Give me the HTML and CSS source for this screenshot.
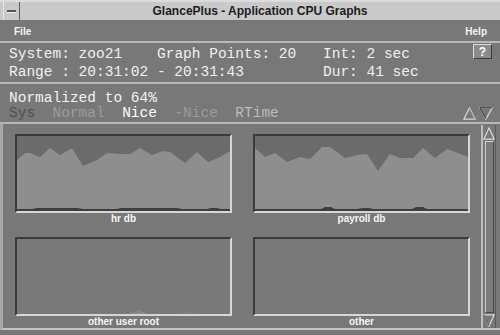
FILE: index.html
```html
<!DOCTYPE html>
<html lang="en">
<head>
  <meta charset="UTF-8">
  <title>GlancePlus - Application CPU Graphs</title>
  <link rel="stylesheet" href="styles.css">
</head>
<body>
  <div class="window">
    <div class="titlebar">
      <div class="win-menu"><span class="win-menu-bar"></span></div>
      <div class="title">GlancePlus - Application CPU Graphs</div>
    </div>

    <div class="menubar">
      <span class="menu-item">File</span>
      <span class="menu-item">Help</span>
    </div>

    <!-- Summary -->
    <div class="info">
      <div class="info-grid">
        <span>System: zoo21</span>
        <span>Graph Points: 20</span>
        <span>Int: 2 sec</span>
        <span class="span-2">Range : 20:31:02 - 20:31:43</span>
        <span>Dur: 41 sec</span>
      </div>
      <button class="help-button">?</button>
    </div>

    <div class="norm">
      <div class="norm-title">Normalized to 64%</div>
      <div class="norm-row">
        <div class="legend"><span class="lg-sys">Sys</span>  <span class="lg-normal">Normal</span>  <span class="lg-nice">Nice</span>  <span class="lg-negnice">-Nice</span>  <span class="lg-rtime">RTime</span></div>
        <div class="arrows">
          <svg width="13" height="13" viewBox="0 0 13 13">
            <polygon points="0.8,12.2 6.5,1 12.2,12.2" fill="none" stroke="#d6d6d6" stroke-width="1.3"/>
            <line x1="6.5" y1="1.5" x2="12" y2="12" stroke="#9a9a9a" stroke-width="1"/>
          </svg>
          <svg width="14" height="13" viewBox="0 0 14 13">
            <polygon points="0.8,0.8 7,12 13.2,0.8" fill="none" stroke="#d6d6d6" stroke-width="1.3"/>
            <line x1="1" y1="1" x2="7" y2="11.5" stroke="#3c3c3c" stroke-width="1.2"/>
            <line x1="0.8" y1="0.8" x2="13.2" y2="0.8" stroke="#3c3c3c" stroke-width="1.2"/>
          </svg>
        </div>
      </div>
    </div>

    <!-- Graph panel -->
    <div class="graphs-area">
      <div class="graphs-grid">
        <div class="graph-cell">
          <div class="graph">
            <svg width="213" height="75" viewBox="0 0 213 75">
              <polygon fill="#8e8e8e" points="0,24 8,17 13,17 23,21 33,12 43,19 55,12 66,30 80,24 90,17 103,18 113,18 123,12 135,19 146,15 153,16 168,27 180,16 191,26 203,21 213,15 213,75 0,75"/>
              <polygon fill="#3e3e3e" points="0,75 0,73 15,73 20,72 60,72 66,73 100,73 104,72 160,72 165,73 190,73 194,72 200,72 204,73 213,73 213,75"/>
            </svg>
          </div>
          <div class="graph-label">hr db</div>
        </div>
        <div class="graph-cell">
          <div class="graph">
            <svg width="213" height="75" viewBox="0 0 213 75">
              <polygon fill="#8e8e8e" points="0,12 10,21 20,17 32,26 45,21 55,23 67,11 75,11 90,22 102,19 112,18 123,35 135,18 145,22 158,22 168,12 180,22 192,13 203,17 213,21 213,75 0,75"/>
              <polygon fill="#3e3e3e" points="0,75 0,73 66,73 70,71 76,71 80,73 102,73 108,72 114,72 118,73 157,73 161,71 168,71 172,73 213,73 213,75"/>
            </svg>
          </div>
          <div class="graph-label">payroll db</div>
        </div>
        <div class="graph-cell">
          <div class="graph graph-empty">
            <svg width="213" height="75" viewBox="0 0 213 75">
              <polygon fill="#8a8a8a" points="112,75 122,71 130,75"/>
              <polygon fill="#808080" points="160,75 170,73 180,75"/>
            </svg>
          </div>
          <div class="graph-label">other user root</div>
        </div>
        <div class="graph-cell">
          <div class="graph graph-empty"></div>
          <div class="graph-label">other</div>
        </div>
      </div>

      <div class="scrollbar">
        <svg class="scroll-arrow" width="12" height="13" viewBox="0 0 12 13">
          <polygon points="0.8,12.2 6,1 11.2,12.2" fill="none" stroke="#d8d8d8" stroke-width="1.2"/>
        </svg>
        <div class="scroll-thumb"></div>
        <svg class="scroll-arrow" width="12" height="13" viewBox="0 0 12 13">
          <polygon points="0.8,0.8 6,12 11.2,0.8" fill="none" stroke="#d8d8d8" stroke-width="1.2"/>
          <line x1="0.8" y1="0.8" x2="6" y2="11.5" stroke="#444" stroke-width="1"/>
        </svg>
      </div>
    </div>
  </div>
</body>
</html>
```

FILE: styles.css
```css
body {
  margin: 0;
  padding: 0;
  background-color: #787878;
  font-family: 'Liberation Sans', Arial, sans-serif;
}

.window {
  width: 500px;
  height: 335px;
  overflow: hidden;
  background-color: #787878;
}

/* Title bar */

.titlebar {
  display: flex;
  height: 20px;
  box-sizing: border-box;
  background-color: #c9c9c9;
  border-top: 2px solid #dcdcdc;
}

.win-menu {
  width: 17px;
  margin-left: 3px;
  box-sizing: border-box;
  border-right: 1px solid #5e5e5e;
  border-left: 1px solid #e6e6e6;
  display: flex;
  align-items: center;
  justify-content: center;
}

.win-menu-bar {
  width: 9px;
  height: 2px;
  background-color: #555;
  box-shadow: 0 1px 0 #f0f0f0;
}

.title {
  flex: 1;
  text-align: center;
  font-weight: 700;
  font-size: 12px;
  line-height: 16px;
  padding-top: 1px;
  color: #1c1c1c;
}

/* Menu bar */

.menubar {
  display: flex;
  justify-content: space-between;
  height: 23px;
  padding: 2px 13px 0 14px;
  box-sizing: border-box;
  border-bottom: 2px solid #b8b8b8;
}

.menu-item {
  font-size: 10px;
  font-weight: 700;
  line-height: 19px;
  color: #f4f4f4;
}

/* Info section */

.info {
  display: flex;
  height: 41px;
  box-sizing: border-box;
  padding: 3px 8px 0 9px;
  border-bottom: 2px solid #b8b8b8;
}

.info-grid {
  display: grid;
  grid-template-columns: 148px 166px auto;
  font-family: 'Liberation Mono', 'Courier New', monospace;
  font-size: 14.5px;
  line-height: 16px;
  color: #f0f0f0;
  white-space: pre;
}

.span-2 {
  grid-column: span 2;
}

.help-button {
  margin-left: auto;
  margin-top: -2px;
  align-self: flex-start;
  width: 19px;
  height: 15px;
  padding: 0;
  background-color: #8a8a8a;
  border: 1px solid;
  border-color: #dedede #3c3c3c #3c3c3c #dedede;
  color: #ffffff;
  font-family: 'Liberation Sans', Arial, sans-serif;
  font-weight: 700;
  font-size: 12px;
  line-height: 12px;
}

/* Normalisation header */

.norm {
  height: 40px;
  box-sizing: border-box;
  padding: 7px 7px 0 9px;
  border-bottom: 2px solid #b8b8b8;
  font-family: 'Liberation Mono', 'Courier New', monospace;
  font-size: 14.5px;
  line-height: 15px;
}

.norm-title {
  color: #f2f2f2;
}

.norm-row {
  display: flex;
  justify-content: space-between;
  align-items: flex-end;
}

.legend {
  white-space: pre;
}

.lg-sys { color: #4e4e4e; }
.lg-normal { color: #9c9c9c; }
.lg-nice { color: #ffffff; }
.lg-negnice { color: #9c9c9c; }
.lg-rtime { color: #bcbcbc; }

.arrows {
  display: flex;
  gap: 3px;
  padding-bottom: 1px;
}

.arrows svg {
  display: block;
}

/* Graph panel */

.graphs-area {
  display: flex;
  height: 206px;
  box-sizing: border-box;
  border-left: 3px solid #a8a8a8;
  border-bottom: 2px solid #c4c4c4;
  padding: 10px 0 0 12px;
}

.graphs-grid {
  display: grid;
  grid-template-columns: 217px 217px;
  column-gap: 21px;
  row-gap: 12px;
  align-content: start;
}

.graph {
  width: 217px;
  height: 79px;
  box-sizing: border-box;
  border: 2px solid;
  border-color: #3a3a3a #d6d6d6 #d6d6d6 #3a3a3a;
  background-color: #6b6b6b;
}

.graph svg {
  display: block;
}

.graph-empty {
  background-color: #797979;
}

.graph-label {
  height: 12px;
  text-align: center;
  font-size: 10px;
  font-weight: 700;
  line-height: 12px;
  color: #f6f6f6;
}

/* Scrollbar */

.scrollbar {
  display: flex;
  flex-direction: column;
  align-items: center;
  width: 15px;
  margin: -9px 0 0 11px;
  box-sizing: border-box;
  border-left: 2px solid #bdbdbd;
  border-right: 1px solid #5a5a5a;
  padding: 2px 0 1px;
  gap: 1px;
}

.scroll-arrow {
  display: block;
}

.scroll-thumb {
  flex: 1;
  width: 9px;
  box-sizing: border-box;
  border: 1px solid;
  border-color: #d0d0d0 #4c4c4c #4c4c4c #d0d0d0;
  background-color: #7c7c7c;
}
```
